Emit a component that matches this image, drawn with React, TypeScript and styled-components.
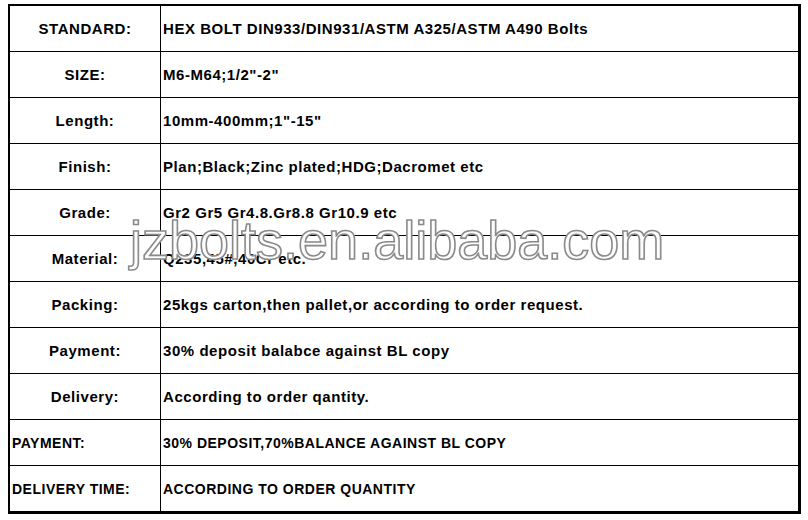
import React from "react";
import styled, { createGlobalStyle } from "styled-components";

const Global = createGlobalStyle`
  html, body { margin: 0; padding: 0; background: #fff; }
  body { font-family: "Liberation Sans", Arial, sans-serif; }
`;

const Page = styled.div`
  position: relative;
  width: 808px;
  height: 520px;
  padding: 4px 0 0 8px;
  box-sizing: border-box;
  background: #fff;
`;

const Table = styled.div`
  width: 793px;
  box-sizing: border-box;
  border-top: 2px solid #000;
  border-left: 2px solid #000;
  border-right: 3px solid #000;
  border-bottom: 3px solid #000;
  display: grid;
  grid-template-columns: 151px 1fr;
`;

const Row = styled.div<{ $last?: boolean }>`
  display: contents;
  & > div {
    border-bottom: ${(p) => (p.$last ? "none" : "1px solid #000")};
  }
`;

const Label = styled.div<{ $left?: boolean }>`
  height: 45px;
  display: flex;
  align-items: center;
  justify-content: ${(p) => (p.$left ? "flex-start" : "center")};
  padding-left: ${(p) => (p.$left ? "2px" : "0")};
  border-right: 1px solid #000;
  font-size: ${(p) => (p.$left ? "14px" : "15px")};
  letter-spacing: ${(p) => (p.$left ? "0.5px" : "0.55px")};
  font-weight: bold;
  color: #000;
  white-space: nowrap;
`;

const Value = styled.div<{ $small?: boolean }>`
  height: 45px;
  display: flex;
  align-items: center;
  padding-left: 2px;
  font-size: ${(p) => (p.$small ? "14px" : "15px")};
  letter-spacing: ${(p) => (p.$small ? "0.5px" : "0.55px")};
  font-weight: bold;
  color: #000;
  white-space: nowrap;
`;

const Watermark = styled.div`
  position: absolute;
  left: 130px;
  top: 209px;
  font-family: "Liberation Sans", Arial, sans-serif;
  font-size: 54px;
  font-weight: normal;
  color: rgba(255, 255, 255, 0.92);
  -webkit-text-stroke: 1.6px #8a8a8a;
  text-shadow: 0 0 1px #d0d0d0;
  white-space: nowrap;
  pointer-events: none;
`;

const rows: { label: string; value: string; left?: boolean }[] = [
  { label: "STANDARD:", value: "HEX BOLT DIN933/DIN931/ASTM A325/ASTM A490 Bolts" },
  { label: "SIZE:", value: "M6-M64;1/2\"-2\"" },
  { label: "Length:", value: "10mm-400mm;1\"-15\"" },
  { label: "Finish:", value: "Plan;Black;Zinc plated;HDG;Dacromet etc" },
  { label: "Grade:", value: "Gr2 Gr5 Gr4.8.Gr8.8 Gr10.9 etc" },
  { label: "Material:", value: "Q235,45#,40Cr etc." },
  { label: "Packing:", value: "25kgs carton,then pallet,or according to order request." },
  { label: "Payment:", value: "30%  deposit balabce against BL copy" },
  { label: "Delivery:", value: "According to order qantity." },
  { label: "PAYMENT:", value: "30% DEPOSIT,70%BALANCE AGAINST BL COPY", left: true },
  { label: "DELIVERY TIME:", value: "ACCORDING TO ORDER QUANTITY", left: true },
];

export default function App() {
  return (
    <>
      <Global />
      <Page>
        <Table>
          {rows.map((r, i) => (
            <Row key={i} $last={i === rows.length - 1}>
              <Label $left={r.left}>{r.label}</Label>
              <Value $small={r.left}>{r.value}</Value>
            </Row>
          ))}
        </Table>
        <Watermark>jzbolts.en.alibaba.com</Watermark>
      </Page>
    </>
  );
}
